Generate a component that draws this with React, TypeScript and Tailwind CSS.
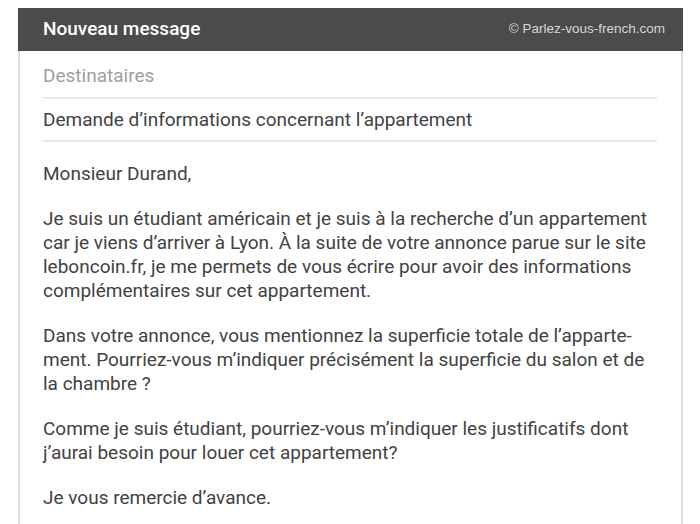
import React from 'react'

const paragraphs = [
  "Je suis un étudiant américain et je suis à la recherche d’un appartement car je viens d’arriver à Lyon. À la suite de votre annonce parue sur le site leboncoin.fr, je me permets de vous écrire pour avoir des informations complémentaires sur cet appartement.",
  "Dans votre annonce, vous mentionnez la superficie totale de l’apparte\u00adment. Pourriez-vous m’indiquer précisément la superficie du salon et de la chambre ?",
  "Comme je suis étudiant, pourriez-vous m’indiquer les justificatifs dont j’aurai besoin pour louer cet appartement?",
  "Je vous remercie d’avance.",
]

export default function App() {
  return (
    <div className="min-h-[524px] bg-white pt-2 pl-[18px] pr-[17px]" style={{ fontFamily: 'Roboto, sans-serif' }}>
      <div className="border-x-2 border-[#dcdcdc]">
        {/* En-tête */}
        <div className="-mx-[2px] h-[43px] bg-[#4b4b4b] flex items-center justify-between pl-[25px] pr-[18px]">
          <span className="text-[19px] font-medium text-white">Nouveau message</span>
          <span className="text-[13.5px] text-[#d8d8d8]" style={{ fontFamily: '"Liberation Sans", Arial, sans-serif' }}>
            © Parlez-vous-french.com
          </span>
        </div>

        <div className="pl-[23px] pr-[24px]">
          <div className="h-[48px] flex items-center border-b-2 border-[#e8e8e8] text-[19px] text-[#9e9e9e] pt-[5px]">
            Destinataires
          </div>
          <div className="h-[43px] flex items-center border-b-2 border-[#e8e8e8] text-[19px] text-[#424242] pt-[2px]">
            Demande d’informations concernant l’appartement
          </div>

          {/* Corps du message */}
          <div className="pt-[20px] text-[19px] leading-[24px] text-[#424242] space-y-[21px] pb-8">
            <p>Monsieur Durand,</p>
            {paragraphs.map((p, i) => (
              <p key={i} style={{ hyphens: 'manual' }}>{p}</p>
            ))}
          </div>
        </div>
      </div>
    </div>
  )
}
